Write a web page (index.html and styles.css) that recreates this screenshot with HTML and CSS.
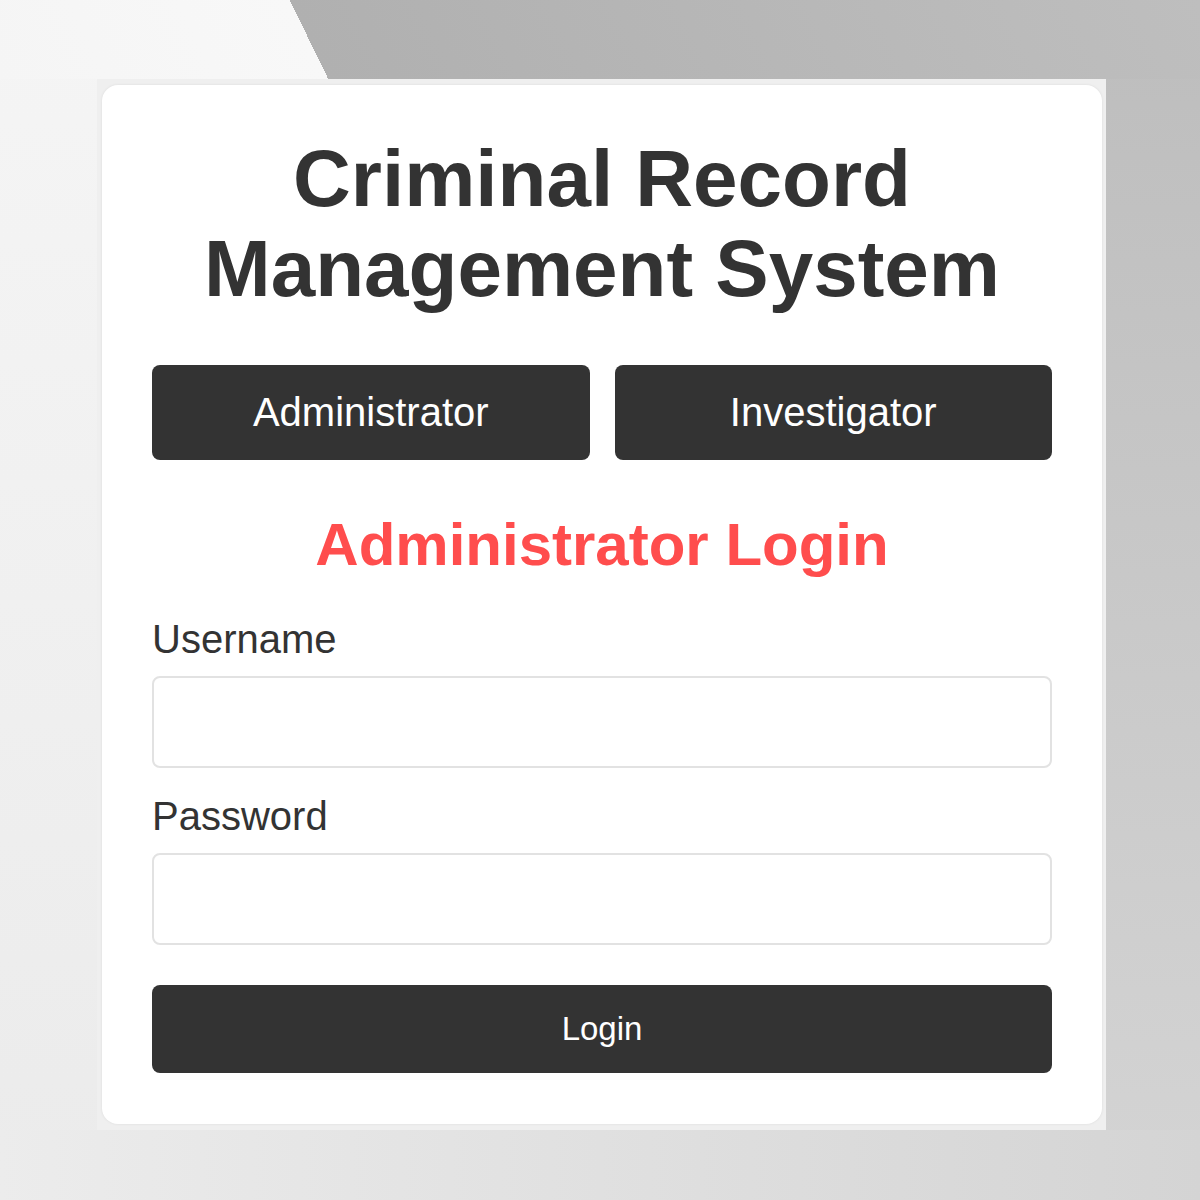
FILE: index.html
```html
<!DOCTYPE html>
<html lang="en">
<head>
<meta charset="utf-8">
<title>Criminal Record Management System</title>
<link rel="stylesheet" href="styles.css">
</head>
<body>
<div class="frame">
  <main class="card">
    <h1 class="title">Criminal Record Management System</h1>
    <div class="roles">
      <button class="role-btn" type="button">Administrator</button>
      <button class="role-btn" type="button">Investigator</button>
    </div>
    <h2 class="login-title">Administrator Login</h2>
    <form class="form">
      <div class="field">
        <label class="label" for="username">Username</label>
        <input class="input" id="username" type="text">
      </div>
      <div class="field">
        <label class="label" for="password">Password</label>
        <input class="input" id="password" type="password">
      </div>
      <button class="login-btn" type="button">Login</button>
    </form>
  </main>
</div>
</body>
</html>
```

FILE: styles.css
```css
html, body {
  margin: 0;
  padding: 0;
}

body {
  width: 1200px;
  height: 1200px;
  box-sizing: border-box;
  padding: 79px 0 0 97px;
  font-family: "Liberation Sans", Arial, sans-serif;
  color: #333333;
  background-color: #e4e4e4;
  background-image:
    linear-gradient(64deg, #f5f5f5 0%, #f8f8f8 26.5%, #b0b0b0 26.5%, #bebebe 100%),
    linear-gradient(to right, #ececec, #d4d4d4),
    linear-gradient(to bottom, #f5f5f5, #ebebeb),
    linear-gradient(to bottom, #bdbdbd, #d4d4d4);
  background-repeat: no-repeat;
  background-size: 100% 79px, 100% 70px, 97px 100%, 94px 100%;
  background-position: left top, left bottom, left top, right top;
  overflow: hidden;
}

.frame {
  width: 1009px;
  box-sizing: border-box;
  padding: 6px 4px 6px 5px;
  background: #efefef;
}

.card {
  background: #ffffff;
  border-radius: 16px;
  padding: 49px 50px 51px 50px;
  box-shadow: 0 0 3px rgba(0, 0, 0, 0.08);
}

.title {
  margin: 0 0 51px 0;
  font-size: 80px;
  line-height: 90px;
  font-weight: bold;
  text-align: center;
  color: #333333;
}

.roles {
  display: grid;
  grid-template-columns: 1fr 1fr;
  gap: 25px;
  margin-bottom: 50px;
}

.role-btn {
  height: 95px;
  border: none;
  border-radius: 8px;
  background: #333333;
  color: #ffffff;
  font-family: "Liberation Sans", Arial, sans-serif;
  font-size: 40px;
  padding: 0;
}

.login-title {
  margin: 0 0 37px 0;
  font-size: 60px;
  line-height: 69px;
  font-weight: bold;
  text-align: center;
  color: #ff4d4d;
}

.form {
  display: flex;
  flex-direction: column;
  gap: 25px;
}

.field {
  display: flex;
  flex-direction: column;
  gap: 14px;
}

.label {
  font-size: 40px;
  line-height: 46px;
  color: #333333;
}

.input {
  height: 92px;
  box-sizing: border-box;
  width: 100%;
  border: 2px solid #e2e2e2;
  border-radius: 8px;
  background: #ffffff;
  margin: 0;
  padding: 0 20px;
  font-size: 32px;
  font-family: "Liberation Sans", Arial, sans-serif;
}

.login-btn {
  margin-top: 15px;
  height: 88px;
  border: none;
  border-radius: 8px;
  background: #333333;
  color: #ffffff;
  font-family: "Liberation Sans", Arial, sans-serif;
  font-size: 33px;
  padding: 0;
}
```
